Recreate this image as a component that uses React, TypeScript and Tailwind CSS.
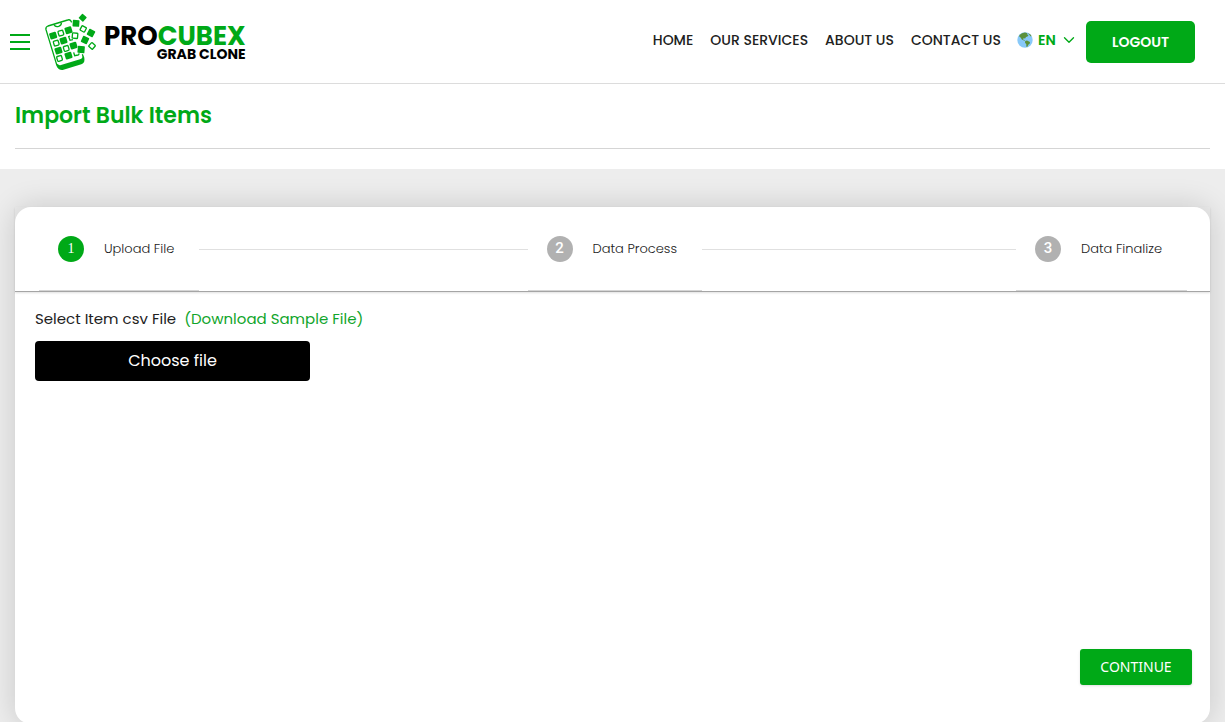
import { ChevronDown } from "lucide-react";

const links = ["Home", "Our Services", "About Us", "Contact Us"];

const steps = [
  { id: 1, label: "Upload File", active: true },
  { id: 2, label: "Data Process", active: false },
  { id: 3, label: "Data Finalize", active: false },
];

export default function App() {
  return (
    <div className="min-h-screen bg-[#ededed] font-['Poppins','Inter',sans-serif] text-[#212121]">
      <Header />
      <section className="bg-white px-[15px] pb-5">
        <div className="flex h-[65px] items-center border-b border-[#d5d5d5] pb-0.5">
          <h1 className="text-[22px] font-semibold text-[#00a917]">
            Import Bulk Items
          </h1>
        </div>
      </section>
      <main className="px-[15px] pt-[38px]">
        <div className="flex min-h-[517px] flex-col rounded-2xl bg-white shadow-[0_0_30px_rgba(0,0,0,0.16)]">
          <Stepper />
          <form className="flex flex-1 flex-col px-5 pt-[17px]">
            <p className="flex gap-2 text-[15px] leading-5">
              <span>Select Item csv File</span>
              <a href="#sample" className="text-[#11a52b]">
                (Download Sample File)
              </a>
            </p>
            <label className="mt-3 flex h-10 w-[275px] cursor-pointer items-center justify-center rounded bg-black text-base text-white">
              Choose file
              <input type="file" accept=".csv" className="sr-only" />
            </label>
            <button
              type="button"
              className="mt-auto mr-[-2px] mb-[39px] h-9 w-28 self-end rounded-[3px] bg-[#00a917] font-['Noto_Sans',sans-serif] text-sm text-white shadow"
            >
              CONTINUE
            </button>
          </form>
        </div>
      </main>
    </div>
  );
}

function Header() {
  return (
    <header className="flex h-21 items-center justify-between border-b border-[#dcdcdc] bg-white pr-[30px] pl-2.5">
      <div className="flex items-center gap-3.5">
        <button type="button" aria-label="Menu" className="flex flex-col gap-[5px]">
          <span className="h-0.5 w-5 bg-[#00a917]" />
          <span className="h-0.5 w-5 bg-[#00a917]" />
          <span className="h-0.5 w-5 bg-[#00a917]" />
        </button>
        <a href="#home" className="flex items-center gap-1.5">
          <LogoMark className="h-[58px] w-[54px]" />
          <span className="flex flex-col items-end font-bold text-black">
            <span className="text-[26px] leading-6">
              PRO<span className="text-[#00a917]">CUBEX</span>
            </span>
            <span className="text-sm leading-3">GRAB CLONE</span>
          </span>
        </a>
      </div>
      <div className="flex items-center">
        <div className="flex items-center pb-1">
          <nav className="flex gap-[17px] text-sm font-medium uppercase">
            {links.map((link) => (
              <a key={link} href="#nav">
                {link}
              </a>
            ))}
          </nav>
          <label className="ml-4 flex items-center text-sm font-semibold text-[#00a917]">
            <GlobeIcon className="mr-[5px] h-4 w-4" />
            <select aria-label="Language" className="appearance-none bg-transparent">
              <option>EN</option>
            </select>
            <ChevronDown className="ml-1 h-[18px] w-[18px]" strokeWidth={1.8} />
          </label>
        </div>
        <button
          type="button"
          className="ml-2 h-[42px] w-[109px] rounded-[5px] bg-[#00a917] text-sm font-semibold text-white"
        >
          LOGOUT
        </button>
      </div>
    </header>
  );
}

function Stepper() {
  return (
    <ol className="flex h-[85px] border-b border-[#a5a5a5] pr-5 pl-6 shadow-[0_1px_2px_rgba(0,0,0,0.12)]">
      {steps.map((step, i) => (
        <li
          key={step.id}
          className={i < steps.length - 1 ? "flex flex-1 items-center" : "flex w-[174px] items-center"}
        >
          <div className="flex h-full items-center border-b border-[#d5d5d5] pr-[25px] pl-[19px] text-[13px] font-light">
            <span
              className={
                step.active
                  ? "mr-5 flex h-[26px] w-[26px] items-center justify-center rounded-full bg-[#00a917] font-['Liberation_Serif',serif] text-sm font-normal text-white"
                  : "mr-5 flex h-[26px] w-[26px] items-center justify-center rounded-full bg-[#b1b1b1] font-['Roboto',sans-serif] text-[15px] font-medium text-white"
              }
            >
              {step.id}
            </span>
            {step.label}
          </div>
          {i < steps.length - 1 && <span className="h-px flex-1 bg-[#e0e0e0]" />}
        </li>
      ))}
    </ol>
  );
}

function LogoMark(props) {
  return (
    <svg {...props} viewBox="132 39 162 174" fill="none" stroke="#00a917" strokeWidth="4">
      <path d="M215 67 L212 62 Q209 58 203 60 L144 78 Q136 81 138 89 L170 194 Q174 207 186 204 L243 187 Q253 184 251 174 L247 163" />
      <path d="M162 74 Q166 82 176 79 Q185 76 184 68" strokeWidth="4" />
      <path d="M168 187 Q173 198 183 195 L240 178 Q249 175 248 166 L253 181 Q254 189 244 193 L188 210 Q176 211 172 201 Z" fill="#00a917" stroke="none" />
      <g fill="#00a917" stroke="none">
        <rect x="149" y="97" width="21" height="20" rx="3" transform="rotate(-17 159 107)" />
        <rect x="195" y="81" width="21" height="20" rx="3" transform="rotate(-17 205 91)" />
        <rect x="180" y="112" width="21" height="20" rx="3" transform="rotate(-17 190 122)" />
        <rect x="165" y="142" width="21" height="20" rx="3" transform="rotate(-17 175 152)" />
        <rect x="210" y="127" width="21" height="20" rx="3" transform="rotate(-17 220 137)" />
        <rect x="195" y="157" width="21" height="20" rx="3" transform="rotate(-17 205 167)" />
        <rect x="218" y="60" width="20" height="20" rx="2" transform="rotate(4 228 70)" />
        <rect x="239" y="44" width="18" height="18" rx="2" transform="rotate(42 248 53)" />
        <rect x="263" y="89" width="20" height="20" rx="2" transform="rotate(28 273 99)" />
        <rect x="245" y="110" width="20" height="20" rx="2" transform="rotate(24 255 120)" />
        <rect x="233" y="138" width="21" height="21" rx="2" transform="rotate(5 243 148)" />
      </g>
      <g strokeWidth="4">
        <rect x="175" y="92" width="15" height="15" rx="3" transform="rotate(-17 182 99)" />
        <rect x="161" y="122" width="15" height="15" rx="3" transform="rotate(-17 168 129)" />
        <rect x="191" y="138" width="15" height="15" rx="3" transform="rotate(-17 198 145)" />
        <rect x="171" y="168" width="15" height="15" rx="3" transform="rotate(-17 178 175)" />
        <path d="M210 108 L206 110 L210 121 L219 119" />
        <path d="M221 157 L224 167 L234 165 Q238 164 236 160" />
        <rect x="217" y="99" width="16" height="16" rx="2" transform="rotate(5 224 107)" />
        <rect x="242" y="79" width="15" height="15" rx="2" transform="rotate(28 249 87)" />
        <rect x="269" y="130" width="15" height="15" rx="2" transform="rotate(42 276 137)" />
      </g>
    </svg>
  );
}

function GlobeIcon(props) {
  return (
    <svg {...props} viewBox="0 0 16 16">
      <circle cx="8" cy="8" r="7.7" fill="#88c9f9" />
      <path
        d="M2.5 3 Q5 .3 8 .4 L10.5 1.2 L9.8 2.3 L11.5 3 L10.5 4.5 L9 5 L8.2 6.5 L6.5 6.3 L6 7.5 L8 8.3 L7.5 8.8 L4.8 7.6 L3.6 5.4 L2.2 4.4 Z M11 .9 Q13.5 2 14.6 4 L13.8 4.6 L12.5 3 Z"
        fill="#5c913b"
      />
      <path d="M8.2 9 L10 8.6 L13 10 L12.8 11.6 L11.3 12.8 L10.4 14.8 L9.3 14.7 L9.3 12.3 L8 10.8 Z" fill="#5c913b" />
    </svg>
  );
}
